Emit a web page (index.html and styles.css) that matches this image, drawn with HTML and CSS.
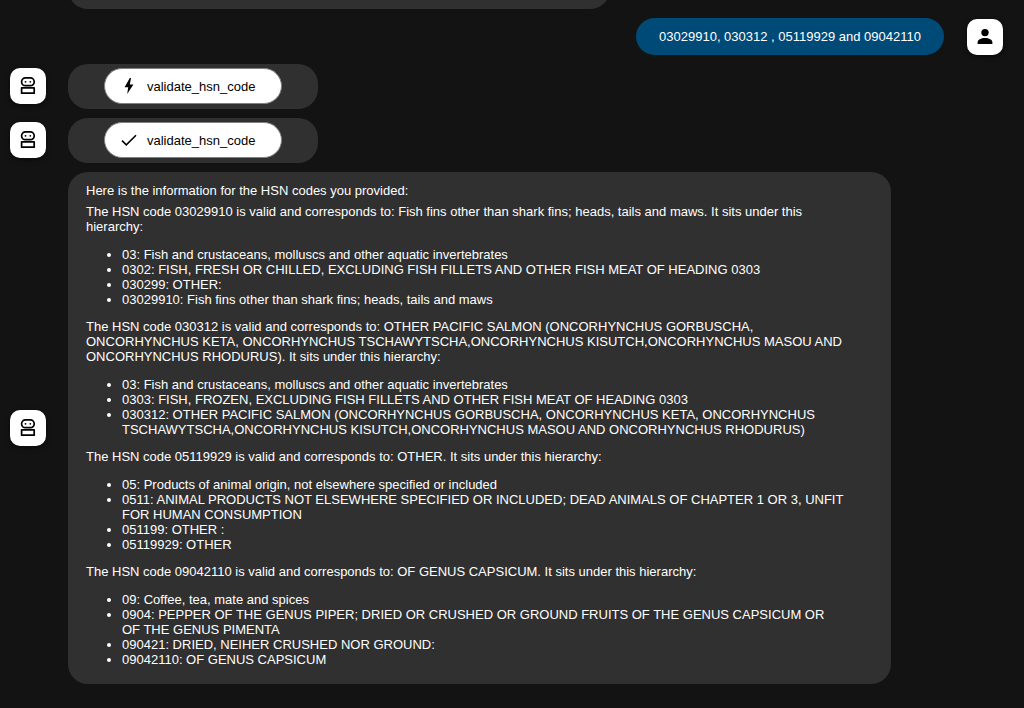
FILE: index.html
```html
<!DOCTYPE html>
<html lang="en">
<head>
<meta charset="utf-8">
<meta name="viewport" content="width=device-width, initial-scale=1">
<title>HSN chat</title>
<link rel="stylesheet" href="styles.css">
</head>
<body>
<svg class="sprite" aria-hidden="true">
  <symbol id="bot" viewBox="0 0 18 18">
    <g fill="none" stroke="#000" stroke-width="1.7">
      <rect x="2.600" y="0.900" width="12.600" height="7.800" rx="3.800"/>
      <path d="M2.600 10.900h12.600v5.300H2.600z" stroke-linejoin="round"/>
    </g>
    <circle cx="6.500" cy="4.800" r="0.900"/><circle cx="11.300" cy="4.800" r="0.900"/>
  </symbol>
</svg>
<main class="chat">
  <div class="bubble previous"></div>

  <div class="row user">
    <div class="bubble question">03029910, 030312 , 05119929 and 09042110</div>
    <div class="avatar">
      <svg class="icon" viewBox="0 0 18 18" aria-hidden="true"><circle cx="9" cy="4.600" r="3.700"/><path d="M1.600 16v-1.600C1.600 11.600 5 10 9 10s7.400 1.600 7.400 4.400V16z"/></svg>
    </div>
  </div>

  <div class="row step">
    <div class="avatar"><svg class="icon" aria-hidden="true"><use href="#bot"/></svg></div>
    <div class="bubble call">
      <button class="tool" type="button">
        <svg class="icon" viewBox="0 0 18 18" aria-hidden="true"><path d="M9.800 1 4.600 10.200h3.600L7.200 17l6.200-9.400H9.800L11 1z"/></svg>
        <span>validate_hsn_code</span>
      </button>
    </div>
  </div>

  <div class="row step">
    <div class="avatar"><svg class="icon" aria-hidden="true"><use href="#bot"/></svg></div>
    <div class="bubble call">
      <button class="tool" type="button">
        <svg class="icon" viewBox="0 0 18 18" aria-hidden="true"><path d="M2 9.600l4.300 4.300L16 4.200" fill="none" stroke="#000" stroke-width="1.600"/></svg>
        <span>validate_hsn_code</span>
      </button>
    </div>
  </div>

  <div class="row">
    <div class="avatar"><svg class="icon" aria-hidden="true"><use href="#bot"/></svg></div>
    <div class="bubble answer">
      <p class="intro">Here is the information for the HSN codes you provided:</p>
      <p>The HSN code 03029910 is valid and corresponds to: Fish fins other than shark fins; heads, tails and maws. It sits under this hierarchy:</p>
      <ul>
        <li>03: Fish and crustaceans, molluscs and other aquatic invertebrates</li>
        <li>0302: FISH, FRESH OR CHILLED, EXCLUDING FISH FILLETS AND OTHER FISH MEAT OF HEADING 0303</li>
        <li>030299: OTHER:</li>
        <li>03029910: Fish fins other than shark fins; heads, tails and maws</li>
      </ul>
      <p>The HSN code 030312 is valid and corresponds to: OTHER PACIFIC SALMON (ONCORHYNCHUS GORBUSCHA, ONCORHYNCHUS KETA, ONCORHYNCHUS TSCHAWYTSCHA,ONCORHYNCHUS KISUTCH,ONCORHYNCHUS MASOU AND ONCORHYNCHUS RHODURUS). It sits under this hierarchy:</p>
      <ul>
        <li>03: Fish and crustaceans, molluscs and other aquatic invertebrates</li>
        <li>0303: FISH, FROZEN, EXCLUDING FISH FILLETS AND OTHER FISH MEAT OF HEADING 0303</li>
        <li>030312: OTHER PACIFIC SALMON (ONCORHYNCHUS GORBUSCHA, ONCORHYNCHUS KETA, ONCORHYNCHUS TSCHAWYTSCHA,ONCORHYNCHUS KISUTCH,ONCORHYNCHUS MASOU AND ONCORHYNCHUS RHODURUS)</li>
      </ul>
      <p>The HSN code 05119929 is valid and corresponds to: OTHER. It sits under this hierarchy:</p>
      <ul>
        <li>05: Products of animal origin, not elsewhere specified or included</li>
        <li>0511: ANIMAL PRODUCTS NOT ELSEWHERE SPECIFIED OR INCLUDED; DEAD ANIMALS OF CHAPTER 1 OR 3, UNFIT FOR HUMAN CONSUMPTION</li>
        <li>051199: OTHER :</li>
        <li>05119929: OTHER</li>
      </ul>
      <p>The HSN code 09042110 is valid and corresponds to: OF GENUS CAPSICUM. It sits under this hierarchy:</p>
      <ul>
        <li>09: Coffee, tea, mate and spices</li>
        <li>0904: PEPPER OF THE GENUS PIPER; DRIED OR CRUSHED OR GROUND FRUITS OF THE GENUS CAPSICUM OR OF THE GENUS PIMENTA</li>
        <li>090421: DRIED, NEIHER CRUSHED NOR GROUND:</li>
        <li>09042110: OF GENUS CAPSICUM</li>
      </ul>
    </div>
  </div>
</main>
</body>
</html>
```
FILE: styles.css
```css
* { box-sizing: border-box; }

body {
  margin: 0;
  overflow: hidden;
  background: #131313;
  color: #fff;
  font: 13px/15px "Liberation Sans", Arial, sans-serif;
}

.sprite { display: none; }

.chat {
  display: flex;
  flex-direction: column;
  gap: 9px;
  margin-top: -36px;
  padding: 0 21px 24px 10px;
}

.row {
  display: flex;
  align-items: center;
  gap: 22px;
}

.user {
  justify-content: flex-end;
  gap: 23px;
}

.step { align-items: flex-start; }

.step .avatar { margin-top: 4px; }

.bubble {
  background: #303030;
  border-radius: 20px;
}

/* Tail of the earlier answer, scrolled past the top edge. */
.previous {
  width: 542px;
  min-height: 45px;
  margin-left: 58px;
}

.question {
  padding: 11px 23px;
  background: #004a77;
}

.avatar {
  display: flex;
  flex: none;
  align-items: center;
  justify-content: center;
  width: 36px;
  height: 36px;
  border-radius: 10px;
  background: #fff;
  box-shadow: 0 2px 5px rgba(0, 0, 0, 0.5);
}

.icon {
  flex: none;
  width: 18px;
  height: 18px;
}

.call { padding: 4px 36px 5px; }

.tool {
  display: flex;
  align-items: center;
  gap: 9px;
  min-width: 178px;
  min-height: 36px;
  padding: 0 15px;
  border: 1px solid #808080;
  border-radius: 18px;
  background: #fff;
  color: #000;
  font: inherit;
}

.answer {
  max-width: 823px;
  padding: 11px 46px 5px 18px;
}

.answer p { margin: 0; }

.answer .intro { margin-bottom: 6px; }

.answer ul {
  margin: 13px 0 12px;
  padding-left: 36px;
}
```
